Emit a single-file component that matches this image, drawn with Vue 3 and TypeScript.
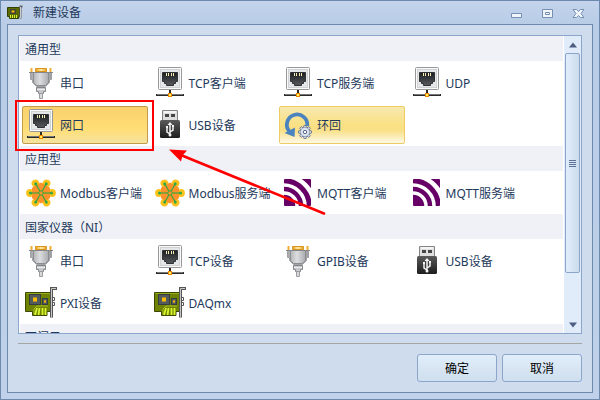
<script setup lang="ts">
import { ref } from 'vue'

type IconName = 'serial' | 'net' | 'usb' | 'loop' | 'modbus' | 'mqtt' | 'card'
interface Device { id: string; label: string; icon: IconName }
interface Group { title: string; items: Device[] }

const groups: Group[] = [
  {
    title: '通用型',
    items: [
      { id: 'serial', label: '串口', icon: 'serial' },
      { id: 'tcp-client', label: 'TCP客户端', icon: 'net' },
      { id: 'tcp-server', label: 'TCP服务端', icon: 'net' },
      { id: 'udp', label: 'UDP', icon: 'net' },
      { id: 'lan', label: '网口', icon: 'net' },
      { id: 'usb', label: 'USB设备', icon: 'usb' },
      { id: 'loop', label: '环回', icon: 'loop' },
    ],
  },
  {
    title: '应用型',
    items: [
      { id: 'modbus-client', label: 'Modbus客户端', icon: 'modbus' },
      { id: 'modbus-server', label: 'Modbus服务端', icon: 'modbus' },
      { id: 'mqtt-client', label: 'MQTT客户端', icon: 'mqtt' },
      { id: 'mqtt-server', label: 'MQTT服务端', icon: 'mqtt' },
    ],
  },
  {
    title: '国家仪器（NI）',
    items: [
      { id: 'ni-serial', label: '串口', icon: 'serial' },
      { id: 'ni-tcp', label: 'TCP设备', icon: 'net' },
      { id: 'ni-gpib', label: 'GPIB设备', icon: 'serial' },
      { id: 'ni-usb', label: 'USB设备', icon: 'usb' },
      { id: 'ni-pxi', label: 'PXI设备', icon: 'card' },
      { id: 'ni-daqmx', label: 'DAQmx', icon: 'card' },
    ],
  },
  { title: '西门子', items: [] },
]

const selected = ref('lan')
const highlighted = ref('loop')
const petals = [0, 60, 120, 180, 240, 300]
const teeth = [0, 45, 90, 135, 180, 225, 270, 315]
</script>

<template>
  <svg class="defs" aria-hidden="true">
    <defs>
      <linearGradient id="steel" x1="0" y1="0" x2="1" y2="0">
        <stop offset="0" stop-color="#a2a4a6" /><stop offset=".45" stop-color="#dcdddf" /><stop offset="1" stop-color="#98999c" />
      </linearGradient>
      <linearGradient id="port" x1="0" y1="0" x2="0" y2="1">
        <stop offset="0" stop-color="#1c1e20" /><stop offset="1" stop-color="#565a5e" />
      </linearGradient>
      <linearGradient id="stick" x1="0" y1="0" x2="0" y2="1">
        <stop offset="0" stop-color="#5a5a5a" /><stop offset="1" stop-color="#1d1d1d" />
      </linearGradient>
      <linearGradient id="gold" x1="0" y1="0" x2="1" y2="0">
        <stop offset="0" stop-color="#e89c1c" /><stop offset=".5" stop-color="#fff0ae" /><stop offset="1" stop-color="#e89c1c" />
      </linearGradient>
      <clipPath id="mqtt-box"><rect x="2" y="2" width="27" height="27" rx="1" /></clipPath>
    </defs>

    <symbol id="icon-serial" viewBox="0 0 32 32">
      <path d="M6.500 1v4M25.500 1v4" stroke="#efad35" stroke-width="2" />
      <path d="M10.500 4.500v-3h11v3z" fill="url(#gold)" stroke="#d9941d" />
      <path d="M5.500 5.500h21v7h-2v3l-4 4h-9l-4-4v-3h-2z" fill="url(#steel)" stroke="#a0a2a5" />
      <path d="M4 5.500h24" stroke="#85878a" />
      <path d="M8.500 6v9.500l3 3h9l3-3V6" fill="none" stroke="#8a8c8f" />
      <path d="M11.500 20.500h9v4h-2v2h-5v-2h-2z" fill="#c5c7ca" stroke="#858789" />
      <path d="M12 22.500h8" stroke="#eceded" />
      <path d="M14.500 26.500h3v5h-3z" fill="#d8d9db" stroke="#9a9c9f" />
    </symbol>

    <symbol id="icon-net" viewBox="0 0 32 32">
      <rect x="4.500" y=".5" width="23" height="22" rx="1" fill="#fafafa" stroke="#96989a" />
      <rect x="6.500" y="2.500" width="19" height="18" fill="#e5e6e7" stroke="#d1d2d3" />
      <path d="M8.500 5.500h15v9h-2v2h-2v2h-7v-2h-2v-2h-2z" fill="url(#port)" stroke="#303335" />
      <path d="M12.500 6v3M14.500 6v3M17.500 6v3M19.500 6v3" stroke="#f7efb5" />
      <path d="M16 23v4M2 28h28" stroke="#2a2a2a" stroke-width="2" />
      <path d="M3 27.500h26" stroke="#777" />
      <rect x="14.500" y="26.500" width="3" height="3" fill="#fff25e" stroke="#ec8700" />
    </symbol>

    <symbol id="icon-usb" viewBox="0 0 32 32">
      <path d="M8.500 12V1.500h15V12" fill="#dedede" stroke="#858585" />
      <path d="M10 3h12" stroke="#f5f5f5" stroke-width="2" />
      <path d="M11 5h4v3h-4zM17 5h4v3h-4z" fill="#454545" />
      <rect x="6" y="11" width="20" height="18" rx="1.500" fill="url(#stick)" />
      <path d="M16 27V14M16 25l-3-2v-5M16 23l3-2v-4" fill="none" stroke="#f4f4f4" stroke-width="1.500" />
      <path d="M13.500 16L16 13l2.500 3z" fill="#f4f4f4" />
      <path d="M12 17h2v2h-2zM18 16h2v2h-2z" fill="#f4f4f4" />
      <circle cx="16" cy="26" r="1.500" fill="#f4f4f4" />
    </symbol>

    <symbol id="icon-loop" viewBox="0 0 32 32">
      <path d="M7.500 22.500A10.200 10.200 0 1 1 25.200 17" fill="none" stroke="#4b83bf" stroke-width="3.800" />
      <path d="M2.500 24L13 18.500 12.500 28z" fill="#4b83bf" />
      <g fill="#dce4f0" stroke="#5d6c88" stroke-width=".8">
        <path v-for="a in teeth" :key="a" d="M21.300 20l.6-3.500h2.200l.6 3.500z" :transform="`rotate(${a} 23 23)`" />
      </g>
      <circle cx="23" cy="23" r="4.600" fill="#dce4f0" stroke="#7583a0" stroke-width=".6" />
      <circle cx="23" cy="23" r="1.700" fill="#fff" stroke="#566785" />
    </symbol>

    <symbol id="icon-modbus" viewBox="0 0 32 32">
      <g v-for="a in petals" :key="a" :transform="`rotate(${a} 16 16)`">
        <path d="M20 16h7" stroke="#fcbd1c" stroke-width="6" />
        <circle cx="27" cy="16" r="3.900" fill="#fcc21c" />
      </g>
      <path d="M16 5.500l9 5.300v10.400l-9 5.300-9-5.300V10.800z" fill="#ff922b" />
      <g v-for="a in petals" :key="a" :transform="`rotate(${a} 16 16)`">
        <path d="M16 16h10" stroke="#3fa63f" stroke-width="1.200" />
        <circle cx="26.500" cy="16" r="1.500" fill="#2da747" />
      </g>
      <circle cx="16" cy="16" r="2.200" fill="#ff922b" stroke="#3fa63f" />
    </symbol>

    <symbol id="icon-mqtt" viewBox="0 0 32 32">
      <g clip-path="url(#mqtt-box)">
        <rect x="2" y="2" width="27" height="27" fill="#606" />
        <circle cx="2" cy="29" r="30" fill="none" stroke="#fff" stroke-width="4.500" />
        <circle cx="2" cy="29" r="21" fill="none" stroke="#fff" stroke-width="3.500" />
        <circle cx="2" cy="29" r="13" fill="none" stroke="#fff" stroke-width="3.500" />
      </g>
    </symbol>

    <symbol id="icon-card" viewBox="0 0 32 32">
      <path d="M.5 5.500H26v19h-4v4H7.500v-4h-7z" fill="#708300" stroke="#3d4900" />
      <path d="M1.500 6.500H25" stroke="#98aa18" />
      <path d="M9 27v-5l3-3h11" fill="none" stroke="#a9c024" />
      <path d="M12 21l-2 7M14.500 21l-1 7M17.500 21v7M20.500 21v7" stroke="#d8f52e" stroke-width="1.800" />
      <rect x="4.500" y="7.500" width="11" height="10" fill="#525a5e" stroke="#363d3d" />
      <rect x="8" y="10.500" width="4" height="4" fill="#ffbd00" />
      <rect x="17.500" y="11.500" width="5" height="6" fill="#525a5e" stroke="#363d3d" />
      <rect x="19" y="13.500" width="2" height="2" fill="#ffbd00" />
      <path d="M32 1.500h-5.500v29" fill="none" stroke="#555" stroke-width="3" />
      <path d="M31 1.500h-4.500V30" fill="none" stroke="#c8c8c8" />
      <path d="M28 10.500h1.500v3H28M28 15.500h1.500v3H28" fill="none" stroke="#555" />
    </symbol>
  </svg>

  <main class="window">
    <header class="titlebar">
      <svg class="title-icon" viewBox="0 0 16 16" aria-hidden="true">
        <path d="M.5 2.500h12v9h-1v2h-9v-2h-2z" fill="#5c6b00" stroke="#343f00" />
        <path d="M3 4h6v5H3z" fill="#3e4536" />
        <path d="M4.500 5.500h3v2h-3z" fill="#ffbd00" />
        <path d="M3.500 10v3M5.500 10v3M7.500 10v3M9.500 10v3" stroke="#d8f52e" />
        <path d="M15.500 1.500h-2v12" fill="none" stroke="#606468" stroke-width="2" />
        <path d="M13.500 2v11M15.500 5v2M15.500 9v2" stroke="#c9cdd2" />
      </svg>
      <h1 class="title">新建设备</h1>
      <div class="window-controls">
        <button type="button" aria-label="最小化"><svg viewBox="0 0 12 12"><path d="M1.500 6.500h10v4h-10z" /></svg></button>
        <button type="button" aria-label="最大化"><svg viewBox="0 0 12 12"><path d="M1.500 2.500h10v8h-10zM4.500 5.500h4v2h-4z" /></svg></button>
        <button type="button" aria-label="关闭"><svg viewBox="0 0 12 12"><path d="M1 2.500h3.500l2 2 2-2H12L9 6.500l3 4H8.500l-2-2-2 2H1l3-4z" /></svg></button>
      </div>
    </header>

    <div class="client">
      <div class="list-box">
        <div class="list">
          <section v-for="group in groups" :key="group.title">
            <h2 class="group-title">{{ group.title }}</h2>
            <div class="items">
              <button
                v-for="item in group.items"
                :key="item.id"
                type="button"
                class="item"
                :class="{ selected: selected === item.id, hot: highlighted === item.id }"
                :aria-pressed="selected === item.id"
                @click="selected = item.id"
              >
                <svg class="icon" viewBox="0 0 32 32" aria-hidden="true"><use :href="`#icon-${item.icon}`" /></svg>
                <span class="label">{{ item.label }}</span>
              </button>
            </div>
          </section>
        </div>
        <div class="scrollbar">
          <button type="button" class="scroll-arrow" aria-label="向上滚动"><svg viewBox="0 0 10 6"><path d="M1 5.500L5 .5l4 5z" /></svg></button>
          <div class="thumb"><i /><i /><i /><i /></div>
          <div class="track" />
          <button type="button" class="scroll-arrow" aria-label="向下滚动"><svg viewBox="0 0 10 6"><path d="M1 .5l4 5 4-5z" /></svg></button>
        </div>
      </div>
      <footer class="actions">
        <button type="button" class="action">确定</button>
        <button type="button" class="action">取消</button>
      </footer>
    </div>

    <svg class="annotation" viewBox="0 0 312 118" aria-hidden="true">
      <rect x="1" y="1" width="137" height="49" fill="none" stroke="#f00" stroke-width="2" />
      <path d="M167 55.500L309 113.500" stroke="#f00" stroke-width="2.600" stroke-linecap="round" />
      <path d="M154 49.500l18 1-4.500 5-1.500 6z" fill="#f00" />
    </svg>
  </main>
</template>

<style>
body { margin: 0; }
</style>

<style scoped>
.defs { position: absolute; width: 0; height: 0; }
.window {
  position: relative;
  box-sizing: border-box;
  display: flex;
  flex-direction: column;
  height: 100vh;
  padding: 0 6px 6px;
  border: 1px solid #6b8aae;
  background: linear-gradient(#c3d4ec, #b9cce6 24px, #c0d1e9);
  color: #1e395b;
  font: 12px/16px "Noto Sans", "Noto Sans CJK SC", sans-serif;
}
button {
  margin: 0;
  padding: 0;
  border: 0;
  background: none;
  color: inherit;
  font: inherit;
}
.titlebar { display: flex; align-items: center; height: 23px; }
.title-icon { width: 16px; height: 16px; }
.title { margin: 0 0 0 10px; font-size: 12px; font-weight: 400; }
.window-controls { display: flex; gap: 19px; margin: 0 9px 0 auto; }
.window-controls button { display: flex; }
.window-controls svg { width: 12px; height: 12px; fill: #f1f5fa; stroke: #7590b4; }
.client {
  display: flex;
  flex: 1;
  flex-direction: column;
  min-height: 0;
  padding: 10px;
  border: 1px solid #6b8aae;
  background: #cfdcee;
}
.list-box {
  display: flex;
  flex: 1;
  min-height: 0;
  border: 1px solid #8ba5cb;
  background: #fff;
}
.list { flex: 1; overflow: hidden; padding: 0 1px; }
.group-title {
  box-sizing: border-box;
  display: flex;
  align-items: center;
  height: 25px;
  margin: 0;
  padding: 2px 0 0 5px;
  background: #eff1f6;
  font-size: 12px;
  font-weight: 400;
}
.items {
  display: grid;
  grid-template-columns: repeat(4, 1fr);
  gap: 4px 3px;
  padding: 3px 30px 2px 2px;
}
.item {
  box-sizing: border-box;
  display: flex;
  align-items: center;
  gap: 3px;
  height: 38px;
  padding: 0 2px;
  border: 1px solid transparent;
  border-radius: 2px;
  white-space: nowrap;
}
.item.selected {
  border-color: #c29b4d;
  background: linear-gradient(#f9d06d, #ffdc74 50%, #ffdf79 65%, #f4e2a0);
}
.item.hot {
  border-color: #eecb63;
  background: linear-gradient(#f7e8af, #fae184 50%, #fae087 65%, #fdf9e7);
}
.icon { flex: none; width: 32px; height: 32px; }
.label { padding-top: 2px; }
.scrollbar {
  display: flex;
  flex-direction: column;
  width: 17px;
  background: #e1ecfa;
}
.scroll-arrow { display: flex; align-items: center; justify-content: center; height: 17px; }
.scroll-arrow svg { width: 10px; height: 6px; fill: #4d5c83; }
.thumb {
  display: flex;
  flex: 219;
  flex-direction: column;
  align-items: center;
  justify-content: center;
  gap: 1px;
  margin: 0 1px;
  border: 1px solid #8ba5cb;
  border-radius: 2px;
  background: linear-gradient(90deg, #e1edfb, #cbdcec);
}
.thumb i { width: 7px; height: 1px; background: #5d7294; }
.track { flex: 43; }
.actions {
  display: flex;
  justify-content: flex-end;
  gap: 5px;
  margin-top: 9px;
  padding-top: 10px;
  border-top: 1px solid #a5a5a5;
}
.action {
  box-sizing: border-box;
  width: 80px;
  height: 28px;
  padding-top: 2px;
  border: 1px solid #8ba5cb;
  border-radius: 3px;
  background: linear-gradient(#e1edfb, #cfdfed);
  color: #000;
}
.annotation { position: absolute; left: 14px; top: 99px; width: 312px; height: 118px; pointer-events: none; }
</style>
